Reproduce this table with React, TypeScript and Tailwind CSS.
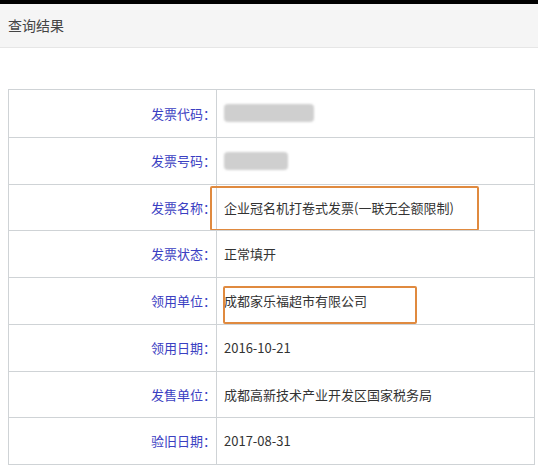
const rows: { label: string; value?: string; blur?: number; box?: 'wide' | 'narrow' }[] = [
    { label: '发票代码', blur: 90 },
    { label: '发票号码', blur: 64 },
    { label: '发票名称', value: '企业冠名机打卷式发票(一联无全额限制)', box: 'wide' },
    { label: '发票状态', value: '正常填开' },
    { label: '领用单位', value: '成都家乐福超市有限公司', box: 'narrow' },
    { label: '领用日期', value: '2016-10-21' },
    { label: '发售单位', value: '成都高新技术产业开发区国家税务局' },
    { label: '验旧日期', value: '2017-08-31' },
];

export default function App() {
    return (
        <div
            className="w-[538px] h-[471px] bg-white overflow-hidden text-[13px] text-[#333]"
            style={{ fontFamily: '"Noto Sans CJK SC", "Liberation Sans", sans-serif' }}
        >
            <div className="h-[4px] bg-black" />
            <div className="h-[44px] bg-[#f5f5f5] border-b border-[#e6e6e6] flex items-center pl-[8px] text-[14px] text-[#444]">
                查询结果
            </div>

            <div className="mt-[41px] ml-[8px] w-[527px] border border-[#cfd3d6]">
                {rows.map((r, i) => (
                    <div
                        key={r.label}
                        className={`relative flex h-[46.75px] ${i > 0 ? 'border-t border-[#cfd3d6]' : ''}`}
                    >
                        <div className="w-[208px] shrink-0 flex items-center justify-end border-r border-[#cfd3d6] text-[#3b40c2]">
                            {r.label}：
                        </div>
                        <div className="flex items-center pl-[7px]">
                            {r.blur ? (
                                <div
                                    className="h-[18px] bg-[#cfcfcf] blur-[1px] rounded-sm"
                                    style={{ width: r.blur }}
                                />
                            ) : (
                                r.value
                            )}
                        </div>
                        {r.box === 'wide' && (
                            <div className="absolute left-[201px] top-[1px] w-[269px] h-[45px] border-2 border-[#e08a3f] rounded-[2px]" />
                        )}
                        {r.box === 'narrow' && (
                            <div className="absolute left-[214px] top-[8px] w-[194px] h-[38px] border-2 border-[#e08a3f] rounded-[2px]" />
                        )}
                    </div>
                ))}
            </div>
        </div>
    );
}
